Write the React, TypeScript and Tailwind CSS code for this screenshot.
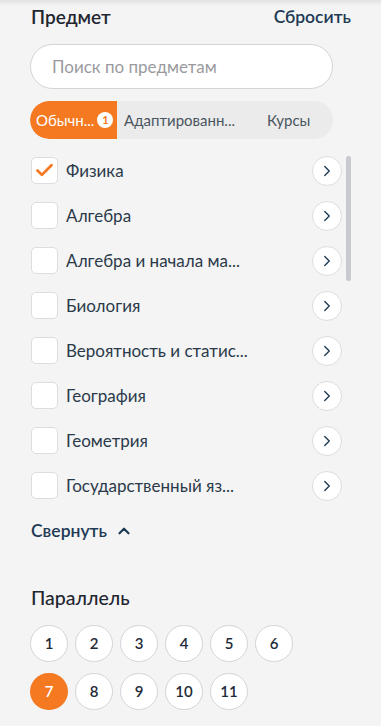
import { Check, ChevronRight, ChevronUp } from 'lucide-react';

const subjects = [
  { name: 'Физика', checked: true },
  { name: 'Алгебра' },
  { name: 'Алгебра и начала ма...' },
  { name: 'Биология' },
  { name: 'Вероятность и статис...' },
  { name: 'География' },
  { name: 'Геометрия' },
  { name: 'Государственный яз...' },
];

const grades = [
  [1, 2, 3, 4, 5, 6],
  [7, 8, 9, 10, 11],
];

function SubjectRow({ name, checked }: { name: string; checked?: boolean }) {
  return (
    <div className="flex items-center h-[45px]">
      <div className="w-[27px] h-[27px] rounded-[5px] bg-white border border-[#dcdde2] flex items-center justify-center shrink-0">
        {checked && <Check size={21} strokeWidth={3.2} className="text-[#f47920]" />}
      </div>
      <span className="ml-[8px] flex-1 text-[17px] text-[#2b3a4a] truncate">{name}</span>
      <button className="w-[30px] h-[30px] rounded-full bg-white border border-[#dcdde2] flex items-center justify-center shrink-0">
        <ChevronRight size={18} strokeWidth={1.8} className="text-[#1e3a54]" />
      </button>
    </div>
  );
}

export default function App() {
  return (
    <div
      className="relative w-[381px] h-[726px] bg-[#f4f4f4] overflow-hidden text-[#1e2b38]"
      style={{ fontFamily: 'Lato, "Noto Sans", sans-serif' }}
    >
      <div className="absolute top-0 left-0 right-0 h-[6px] bg-gradient-to-b from-[#e2e2e2] to-transparent" />

      <div className="pl-[31px] pr-[30px] pt-[5px]">
        <div className="flex items-center justify-between h-[24px]">
          <h2 className="text-[19px] font-semibold text-[#1f2630]">Предмет</h2>
          <button className="text-[17.5px] font-semibold text-[#1e3a54]">Сбросить</button>
        </div>

        <div className="mt-[15px] w-[303px] -ml-px h-[45px] rounded-full bg-white border border-[#d3d4da] flex items-center px-[21px]">
          <span className="text-[17px] text-[#9a9a9e]">Поиск по предметам</span>
        </div>

        <div className="mt-[12px] w-[303px] -ml-px h-[38px] rounded-full bg-[#ebebeb] flex items-center overflow-hidden text-[15px]">
          <div className="h-full w-[87px] bg-[#f47920] rounded-l-full flex items-center pl-[6px] gap-[3px] text-white">
            <span>Обычн...</span>
            <span className="w-[16px] h-[16px] rounded-full bg-white text-[#f47920] text-[11px] font-bold flex items-center justify-center">1</span>
          </div>
          <span className="ml-[7px] text-[#4a5560]">Адаптированн...</span>
          <span className="ml-[32px] text-[#4a5560]">Курсы</span>
        </div>

        <div className="relative mt-[9px] w-[311px]">
          {subjects.map((s) => (
            <SubjectRow key={s.name} name={s.name} checked={s.checked} />
          ))}
          <div className="absolute right-[-9px] top-[8px] w-[5px] h-[125px] rounded-full bg-[#c9cacf]" />
        </div>

        <button className="mt-[10px] flex items-center gap-[8px] text-[17.5px] font-semibold text-[#1e3a54]">
          Свернуть
          <ChevronUp size={18} strokeWidth={3} />
        </button>

        <h3 className="mt-[39px] text-[19.5px] font-medium text-[#1f2630]">Параллель</h3>

        <div className="mt-[12px] flex flex-col gap-[11px]">
          {grades.map((row, i) => (
            <div key={i} className="flex gap-[7px] -ml-px">
              {row.map((g) => (
                <div
                  key={g}
                  className={
                    g === 7
                      ? 'w-[38px] h-[37px] rounded-full bg-[#f47920] text-white flex items-center justify-center text-[15px] font-semibold'
                      : 'w-[38px] h-[37px] rounded-full bg-white border border-[#d3d4da] text-[#1e2b38] flex items-center justify-center text-[15px] font-semibold'
                  }
                >
                  {g}
                </div>
              ))}
            </div>
          ))}
        </div>
      </div>
    </div>
  );
}
